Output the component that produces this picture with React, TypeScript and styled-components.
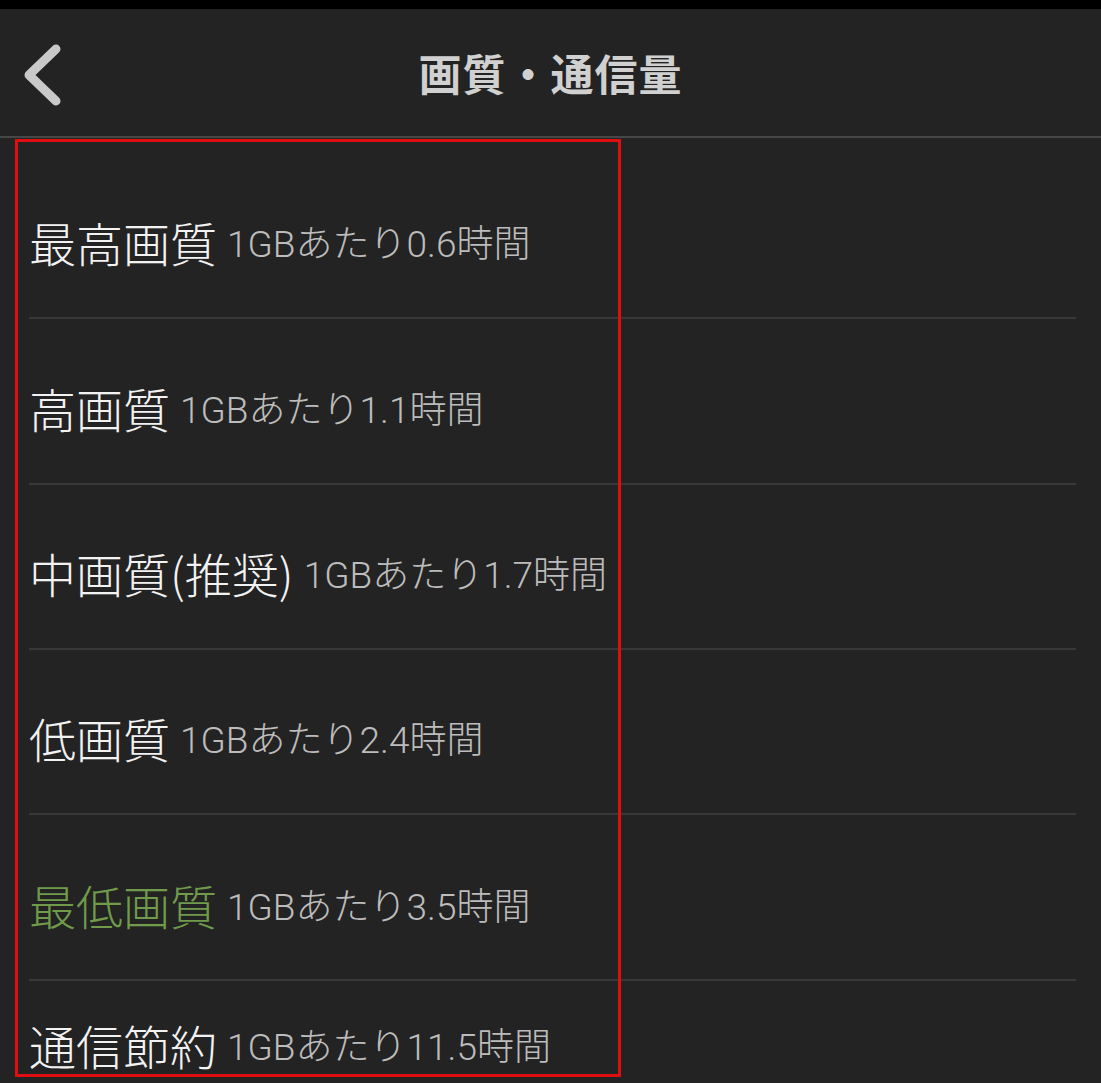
import React from "react";
import styled, { createGlobalStyle } from "styled-components";

const GlobalStyle = createGlobalStyle`
  html, body {
    margin: 0;
    padding: 0;
    background: #232323;
  }
  body {
    font-family: "Noto Sans CJK JP", "Noto Sans", sans-serif;
  }
`;

type Item = { label: string; note: string; active?: boolean; h: number; pt: number };

const items: Item[] = [
  { label: "最高画質", note: "1GBあたり0.6時間", h: 181, pt: 27 },
  { label: "高画質", note: "1GBあたり1.1時間", h: 166, pt: 12 },
  { label: "中画質(推奨)", note: "1GBあたり1.7時間", h: 165, pt: 12 },
  { label: "低画質", note: "1GBあたり2.4時間", h: 165, pt: 12 },
  { label: "最低画質", note: "1GBあたり3.5時間", active: true, h: 166, pt: 14 },
  { label: "通信節約", note: "1GBあたり11.5時間", h: 102, pt: 25 },
];

const Page = () => {
  return (
    <Screen>
      <GlobalStyle />
      <StatusStrip />
      <Header>
        <BackButton aria-label="戻る">
          <svg width="44" height="66" viewBox="0 0 44 66">
            <polyline
              points="34,6 7,32 34,58"
              fill="none"
              stroke="#c9c9c9"
              strokeWidth="9"
              strokeLinecap="round"
              strokeLinejoin="round"
            />
          </svg>
        </BackButton>
        <Title>画質・通信量</Title>
      </Header>
      <List>
        {items.map((it, i) => (
          <Row key={it.label} $h={it.h} $pt={it.pt} $last={i === items.length - 1}>
            <Label $active={it.active}>{it.label}</Label>
            <Note>{it.note}</Note>
          </Row>
        ))}
        <Highlight />
      </List>
    </Screen>
  );
};

const Screen = styled.div`
  width: 1101px;
  height: 1083px;
  overflow: hidden;
  background: #232323;
  display: flex;
  flex-direction: column;
`;

const StatusStrip = styled.div`
  height: 9px;
  background: #000;
  flex-shrink: 0;
`;

const Header = styled.header`
  position: relative;
  height: 127px;
  flex-shrink: 0;
  display: flex;
  align-items: center;
  justify-content: center;
  border-bottom: 2px solid #474747;
  background: #232323;
`;

const BackButton = styled.div`
  position: absolute;
  left: 22px;
  top: 34px;
  width: 44px;
  height: 66px;
`;

const Title = styled.h1`
  margin: 0;
  margin-top: -2px;
  font-size: 43px;
  font-weight: 700;
  color: #d0d0d0;
  letter-spacing: 1px;
`;

const List = styled.div`
  position: relative;
  flex: 1;
  display: flex;
  flex-direction: column;
`;

const Row = styled.div<{ $h: number; $pt: number; $last?: boolean }>`
  height: ${(p) => p.$h}px;
  padding-top: ${(p) => p.$pt}px;
  box-sizing: border-box;
  margin: 0 25px 0 29px;
  display: flex;
  align-items: center;
  gap: 10px;
  border-bottom: ${(p) => (p.$last ? "none" : "2px solid #383838")};
  flex-shrink: 0;
`;

const Label = styled.span<{ $active?: boolean }>`
  font-size: 47px;
  font-weight: 300;
  color: ${(p) => (p.$active ? "#6f9b4a" : "#f2f2f2")};
  line-height: 1;
  white-space: nowrap;
`;

const Note = styled.span`
  font-family: "Roboto", "Noto Sans CJK JP", sans-serif;
  font-size: 37px;
  font-weight: 300;
  color: #bcbcbc;
  line-height: 1;
  white-space: nowrap;
  margin-top: 6px;
`;

const Highlight = styled.div`
  position: absolute;
  left: 15px;
  top: 1px;
  width: 606px;
  height: 938px;
  border: 3px solid #e00e0e;
  box-sizing: border-box;
  pointer-events: none;
`;

export default function App() {
  return <Page />;
}
